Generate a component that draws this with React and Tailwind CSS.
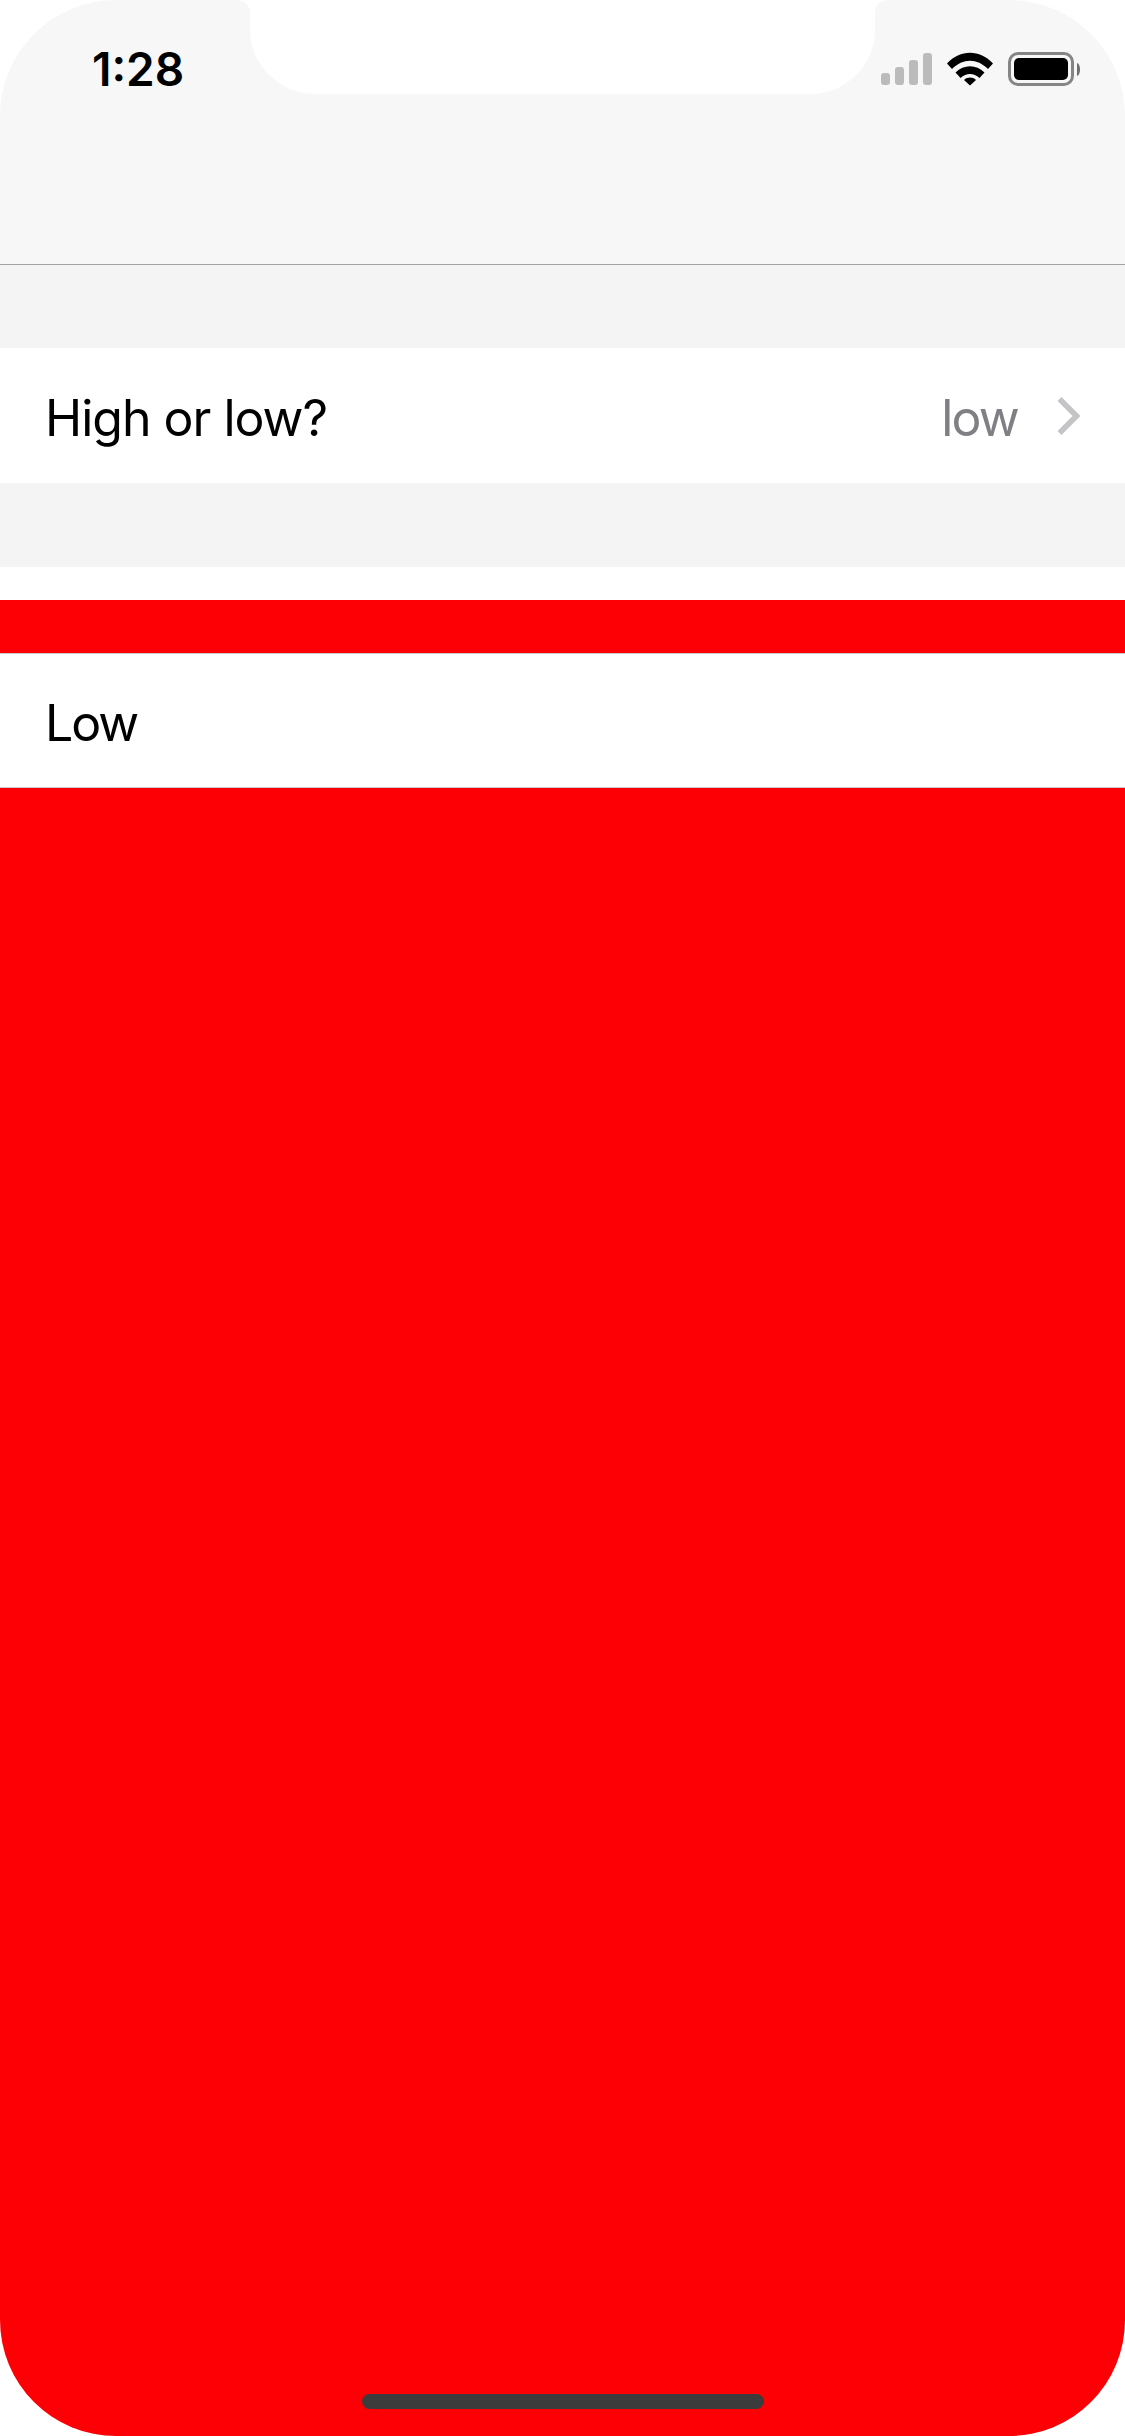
export default function App() {
  const font = { fontFamily: 'Inter, "Liberation Sans", sans-serif' };
  return (
    <div className="relative w-[1125px] h-[2436px] bg-white overflow-hidden rounded-[116px] flex flex-col" style={font}>
      <div className="h-[264px] shrink-0 bg-[#f7f7f7] flex items-start justify-between pt-[52px] pl-[92px] pr-[44px]">
        <span className="text-[46px] leading-[34px] font-semibold text-black tracking-[0px]">1:28</span>
        <div className="flex items-start">
          <svg width="51" height="34" viewBox="0 0 51 34" className="mr-[15px]">
            <rect x="0" y="21" width="9" height="12" rx="3" fill="#bbbbbb" />
            <rect x="14" y="15" width="9" height="18" rx="3" fill="#bbbbbb" />
            <rect x="28" y="8" width="9" height="25" rx="3" fill="#bbbbbb" />
            <rect x="42" y="1" width="9" height="32" rx="3" fill="#bbbbbb" />
          </svg>
          <svg width="46" height="34" viewBox="0 0 46 34" className="mr-[15px]">
            <path d="M0 11.5 C13 -3 33 -3 46 11.5 L41 17 C30 6 16 6 5 17 Z" fill="#000" />
            <path d="M8.5 20.5 C17 12 29 12 37.5 20.5 L32.5 26 C26.5 20.5 19.5 20.5 13.5 26 Z" fill="#000" />
            <path d="M17 28 C20.5 24.8 25.5 24.8 29 28 L23 33.5 Z" fill="#000" />
          </svg>
          <div className="flex items-center">
            <div className="w-[66px] h-[34px] rounded-[10px] border-[3px] border-[#858585] p-[3px]">
              <div className="w-full h-full rounded-[5px] bg-black"></div>
            </div>
            <svg width="7" height="13" viewBox="0 0 7 13" className="ml-[3px] mr-[-3px]">
              <path d="M0 0 C4 1 4 12 0 13 Z" fill="#6f6f6f" />
            </svg>
          </div>
        </div>
      </div>
      <div className="h-px shrink-0 bg-[#a3a3a3]"></div>
      <div className="h-[83px] shrink-0 bg-[#f4f4f4]"></div>
      <div className="h-[135px] shrink-0 bg-white flex items-center justify-between pl-[45px] pr-[45px]">
        <span className="text-[50px] leading-[60px] pt-[5px] text-black tracking-[-1px]">High or low?</span>
        <div className="flex items-center">
          <span className="text-[50px] leading-[60px] pt-[5px] text-[#7f7f84] tracking-[-1.8px]">low</span>
          <svg width="23" height="40" viewBox="0 0 23 40" className="ml-[39px]">
            <path d="M2.5 3 L19.5 20 L2.5 37" fill="none" stroke="#c4c4c7" strokeWidth="5.5" />
          </svg>
        </div>
      </div>
      <div className="h-[84px] shrink-0 bg-[#f4f4f4]"></div>
      <div className="h-[33px] shrink-0 bg-white"></div>
      <div className="h-[53px] shrink-0 bg-[#fd0006]"></div>
      <div className="h-[135px] shrink-0 bg-white border-y border-[#c8c8c8] flex items-center pl-[45px]">
        <span className="text-[50px] leading-[60px] pt-[5px] text-black tracking-[-2px]">Low</span>
      </div>
      <div className="flex-1 bg-[#fd0006]"></div>

      <svg width="654" height="94" viewBox="0 0 654 94" className="absolute top-0 left-[236px]">
        <path d="M0 0 C9 0 14 5 14 14 V30 C14 65 44 94 79 94 H575 C610 94 639 65 639 30 V14 C639 5 644 0 653 0 Z" fill="#ffffff" />
      </svg>
      <div className="absolute left-[362px] top-[2394px] w-[402px] h-[15px] rounded-[8px] bg-[#3c3c3c]"></div>
    </div>
  );
}
